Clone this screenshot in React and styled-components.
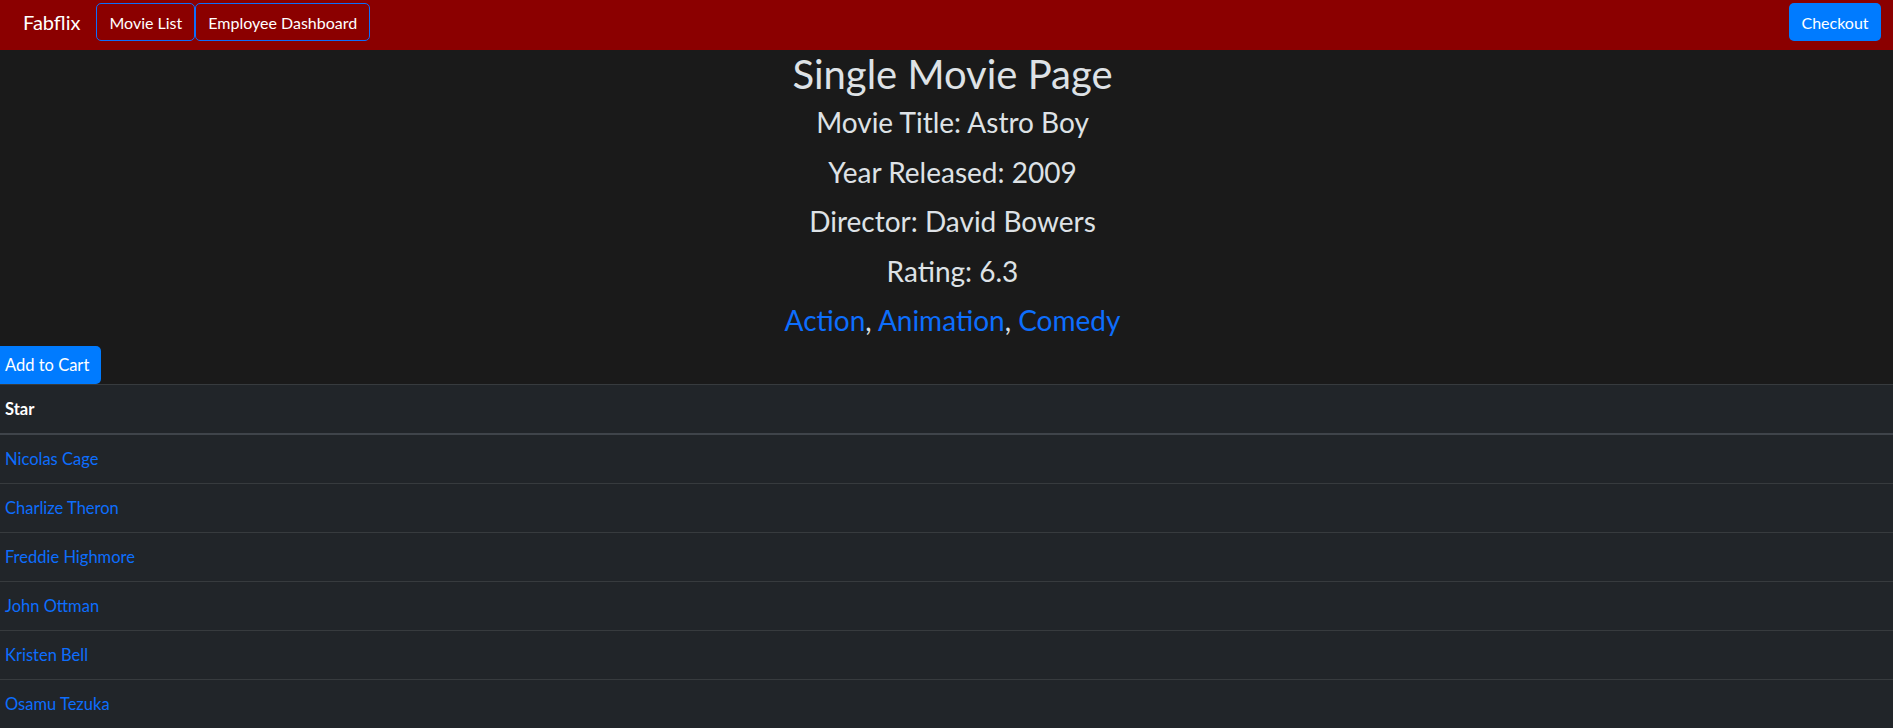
import styled, { createGlobalStyle } from "styled-components";

const GlobalStyle = createGlobalStyle`
    body {
        margin: 0;
        background-color: #1a1a1a;
        color: #dee2e6;
        font-family: Lato, "Liberation Sans", sans-serif;
        font-size: 16px;
        line-height: 1.5;
    }
`;

const stars = [
    "Nicolas Cage",
    "Charlize Theron",
    "Freddie Highmore",
    "John Ottman",
    "Kristen Bell",
    "Osamu Tezuka",
];

const genres = ["Action", "Animation", "Comedy"];

function App() {
    return (
        <>
            <GlobalStyle />
            <Navbar>
                <Brand>Fabflix</Brand>
                <NavButton>Movie List</NavButton>
                <NavButton>Employee Dashboard</NavButton>
                <Checkout>Checkout</Checkout>
            </Navbar>
            <Details>
                <Title>Single Movie Page</Title>
                <Info>Movie Title: Astro Boy</Info>
                <Info>Year Released: 2009</Info>
                <Info>Director: David Bowers</Info>
                <Info>Rating: 6.3</Info>
                <Info last>
                    {genres.map((g, i) => (
                        <span key={g}>
                            <Link href="#">{g}</Link>
                            {i < genres.length - 1 ? ", " : ""}
                        </span>
                    ))}
                </Info>
            </Details>
            <CartButton>Add to Cart</CartButton>
            <Table>
                <thead>
                    <tr>
                        <Th>Star</Th>
                    </tr>
                </thead>
                <tbody>
                    {stars.map((s) => (
                        <tr key={s}>
                            <Td><StarLink href="#">{s}</StarLink></Td>
                        </tr>
                    ))}
                </tbody>
            </Table>
        </>
    );
}

const Navbar = styled.nav`
    height: 50px;
    box-sizing: border-box;
    background-color: #8b0000;
    display: flex;
    align-items: flex-start;
    padding: 3px 12px 0 23px;
`;

const Brand = styled.div`
    font-size: 20px;
    line-height: 38px;
    color: #fff;
    margin-right: 16px;
`;

const NavButton = styled.button`
    height: 38px;
    padding: 6px 12px;
    font-family: inherit;
    font-size: 16px;
    color: #fff;
    background: transparent;
    border: 1px solid #0d6efd;
    border-radius: 5px;
    cursor: pointer;
`;

const Checkout = styled.button`
    margin-left: auto;
    height: 38px;
    width: 92px;
    font-family: inherit;
    font-size: 16px;
    color: #fff;
    background-color: #007bff;
    border: none;
    border-radius: 5px;
`;

const Details = styled.div`
    text-align: center;
    padding-left: 12px;
`;

const Title = styled.h1`
    margin: 0 0 8px;
    font-size: 40px;
    font-weight: 400;
    line-height: 48px;
`;

const Info = styled.h3`
    margin: 0 0 ${(p) => (p.last ? "8px" : "16px")};
    font-size: 28px;
    font-weight: 400;
    line-height: 33.6px;
`;

const Link = styled.a`
    color: #0d6efd;
    text-decoration: none;
`;

const CartButton = styled.button`
    display: block;
    margin-left: -7px;
    height: 38px;
    padding: 6px 12px;
    font-family: inherit;
    font-size: 16.5px;
    color: #fff;
    background-color: #007bff;
    border: none;
    border-radius: 5px;
`;

const Table = styled.table`
    width: 100%;
    border-collapse: collapse;
    background-color: #212529;
    color: #fff;
`;

const Th = styled.th`
    text-align: left;
    font-weight: 700;
    font-size: 16.5px;
    line-height: 24px;
    padding: 12px 12px 12px 5px;
    border-top: 1px solid #373b3e;
    border-bottom: 2px solid #3f444a;
`;

const Td = styled.td`
    padding: 12px 12px 12px 5px;
    border-top: 1px solid #373b3e;
    font-size: 16.5px;
    line-height: 24px;
`;

const StarLink = styled.a`
    color: #0d6efd;
    text-decoration: none;
`;

export default App;
